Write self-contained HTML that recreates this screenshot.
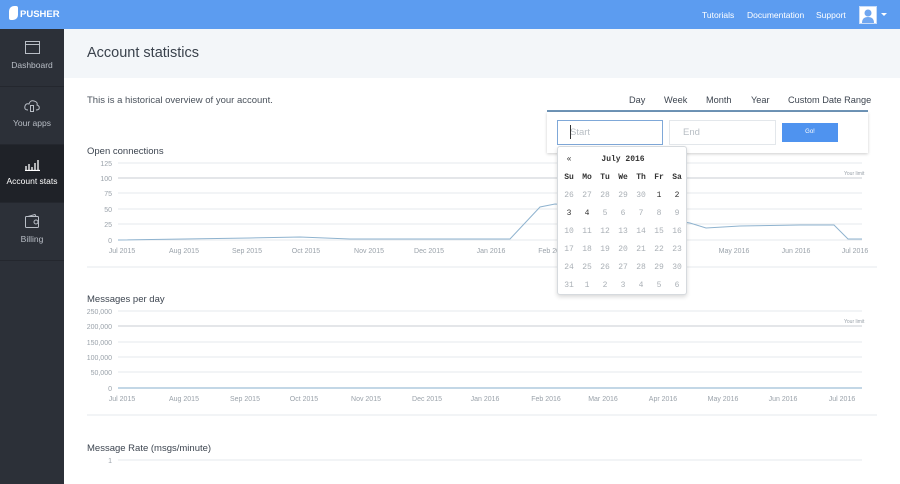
<!DOCTYPE html><html><head><style>
*{margin:0;padding:0;box-sizing:border-box}
body{width:900px;height:484px;overflow:hidden;background:#fff;font-family:"Liberation Sans",sans-serif;position:relative;color:#3d4550}
.a{position:absolute;white-space:nowrap}
.top{left:0;top:0;width:900px;height:29px;background:#5c9cf0}
.side{left:0;top:29px;width:64px;height:455px;background:#2c3038}
.it{position:absolute;left:0;width:64px;height:58px;border-bottom:1px solid #24272e;color:#b9bec6;font-size:8.5px;text-align:center}
.it span{position:absolute;left:0;right:0;bottom:16px}
.tab{font-size:9.2px;color:#3d4550;top:95px}
.cal{font-family:"Liberation Mono",monospace;font-size:8px;text-align:center}
.cal td{width:18px;height:18px;color:#aab0b6}
</style></head><body>
<div class="a top"></div>
<div class="a" style="left:9px;top:6px;width:9px;height:14px;background:#fff;border-radius:5px 2px 5px 2px"></div>
<div class="a" style="left:20px;top:9px;color:#fff;font-size:9.5px;font-weight:bold">PUSHER</div>
<div class="a" style="left:702px;top:10px;color:#fff;font-size:8.5px">Tutorials</div>
<div class="a" style="left:747px;top:10px;color:#fff;font-size:8.5px">Documentation</div>
<div class="a" style="left:816px;top:10px;color:#fff;font-size:8.5px">Support</div>
<div class="a" style="left:859px;top:6px;width:18px;height:18px;background:#fff;border:1px solid #c8dcf8"><svg width="16" height="16"><circle cx="8" cy="6" r="3.5" fill="#6fa6f0"/><path d="M2 16 Q2 10 8 10 Q14 10 14 16Z" fill="#6fa6f0"/></svg></div>
<div class="a" style="left:881px;top:13px;border:3px solid transparent;border-top-color:#fff"></div>
<div class="a side">
<div class="it" style="top:0"><svg style="position:absolute;left:25px;top:12px" width="15" height="13"><rect x=".5" y=".5" width="14" height="12" fill="none" stroke="#b9bec6"/><line x1="0" y1="3.5" x2="15" y2="3.5" stroke="#b9bec6"/></svg><span>Dashboard</span></div>
<div class="it" style="top:58px"><svg style="position:absolute;left:24px;top:12px" width="16" height="14"><path d="M4 11 Q0 11 1 7 Q2 4 5 5 Q6 1 10 2 Q14 3 13 6 Q16 7 15 10 Q14 11 12 11" fill="none" stroke="#b9bec6"/><rect x="6.5" y="6.5" width="3" height="6" fill="none" stroke="#b9bec6"/></svg><span>Your apps</span></div>
<div class="it" style="top:116px;background:#1f2228;color:#fff"><svg style="position:absolute;left:25px;top:14px" width="15" height="12"><path d="M1 11V7M4 11V5M7 11V8M10 11V4M13 11V1M0 11.5H15" stroke="#fff" stroke-width="1.3"/></svg><span>Account stats</span></div>
<div class="it" style="top:174px"><svg style="position:absolute;left:25px;top:11px" width="15" height="14"><rect x=".5" y="2.5" width="13" height="11" rx="1" fill="none" stroke="#b9bec6"/><circle cx="11" cy="8" r="2" fill="none" stroke="#b9bec6"/><path d="M3 2.5 L10 .5 L11 2.5" fill="none" stroke="#b9bec6"/></svg><span>Billing</span></div>
</div>
<div class="a" style="left:64px;top:29px;width:836px;height:49px;background:#f3f6f9"></div>
<div class="a" style="left:87px;top:45px;font-size:14.5px;color:#3a424c">Account statistics</div>
<div class="a" style="left:87px;top:95px;font-size:9.5px;color:#4a525c">This is a historical overview of your account.</div>
<div class="a tab" style="left:629px">Day</div>
<div class="a tab" style="left:664px">Week</div>
<div class="a tab" style="left:706px">Month</div>
<div class="a tab" style="left:751px">Year</div>
<div class="a tab" style="left:788px">Custom Date Range</div>
<div class="a" style="left:87px;top:146px;font-size:9.5px;color:#3d4550">Open connections</div>
<div class="a" style="left:87px;top:294px;font-size:9.5px;color:#3d4550">Messages per day</div>
<div class="a" style="left:87px;top:443px;font-size:9.5px;color:#3d4550">Message Rate (msgs/minute)</div>
<svg class="a" style="left:0;top:0" width="900" height="484" font-family="Liberation Sans" font-size="7" fill="#9aa2aa">
<g stroke="#e6e9ec"><line x1="118" y1="163" x2="862" y2="163"/><line x1="118" y1="193" x2="862" y2="193"/><line x1="118" y1="209" x2="862" y2="209"/><line x1="118" y1="224" x2="862" y2="224"/><line x1="118" y1="240" x2="862" y2="240"/>
<line x1="118" y1="311" x2="862" y2="311"/><line x1="118" y1="342" x2="862" y2="342"/><line x1="118" y1="357" x2="862" y2="357"/><line x1="118" y1="372" x2="862" y2="372"/><line x1="118" y1="460" x2="862" y2="460"/>
<line x1="87" y1="267" x2="877" y2="267"/><line x1="87" y1="415" x2="877" y2="415"/></g>
<g stroke="#c9ced3"><line x1="118" y1="178" x2="862" y2="178"/><line x1="118" y1="326" x2="862" y2="326"/></g>
<line x1="118" y1="388" x2="862" y2="388" stroke="#9fbfd6" stroke-width="1.2"/>
<polyline fill="none" stroke="#8fb3cf" points="118,240 250,238 300,237 350,239 510,239 540,207 555,204 570,205 690,223 706,228 740,226 800,225 834,225 848,239 862,239"/>
<text x="844" y="175" font-size="5">Your limit</text><text x="844" y="323" font-size="5">Your limit</text>
<g text-anchor="end"><text x="112" y="166">125</text><text x="112" y="181">100</text><text x="112" y="196">75</text><text x="112" y="212">50</text><text x="112" y="227">25</text><text x="112" y="243">0</text>
<text x="112" y="314">250,000</text><text x="112" y="329">200,000</text><text x="112" y="345">150,000</text><text x="112" y="360">100,000</text><text x="112" y="375">50,000</text><text x="112" y="391">0</text><text x="112" y="463">1</text></g>
<g text-anchor="middle"><text x="122" y="253">Jul 2015</text><text x="184" y="253">Aug 2015</text><text x="247" y="253">Sep 2015</text><text x="306" y="253">Oct 2015</text><text x="369" y="253">Nov 2015</text><text x="429" y="253">Dec 2015</text><text x="491" y="253">Jan 2016</text><text x="553" y="253">Feb 2016</text><text x="734" y="253">May 2016</text><text x="796" y="253">Jun 2016</text><text x="855" y="253">Jul 2016</text>
<text x="122" y="401">Jul 2015</text><text x="184" y="401">Aug 2015</text><text x="245" y="401">Sep 2015</text><text x="304" y="401">Oct 2015</text><text x="366" y="401">Nov 2015</text><text x="427" y="401">Dec 2015</text><text x="485" y="401">Jan 2016</text><text x="546" y="401">Feb 2016</text><text x="603" y="401">Mar 2016</text><text x="663" y="401">Apr 2016</text><text x="723" y="401">May 2016</text><text x="783" y="401">Jun 2016</text><text x="842" y="401">Jul 2016</text></g>
</svg>
<div class="a" style="left:547px;top:110px;width:321px;height:2px;background:#6f95b8"></div>
<div class="a" style="left:547px;top:112px;width:321px;height:41px;background:#fff;box-shadow:0 1px 3px rgba(0,0,0,.2)"></div>
<div class="a" style="left:557px;top:120px;width:106px;height:25px;border:1px solid #7fa8d8;font-size:9.5px;color:#b8bec4;padding:6px 0 0 12px">Start</div>
<div class="a" style="left:570px;top:125px;width:1px;height:14px;background:#333"></div>
<div class="a" style="left:669px;top:120px;width:107px;height:25px;border:1px solid #e3e7eb;font-size:9.5px;color:#b8bec4;padding:6px 0 0 13px">End</div>
<div class="a" style="left:782px;top:123px;width:56px;height:19px;background:#4f93ef;color:#fff;font-size:6px;text-align:center;line-height:19px">Go!</div>
<div class="a" style="left:557px;top:146px;width:130px;height:149px;background:#fff;border:1px solid #d6dade;border-radius:3px;box-shadow:0 2px 4px rgba(0,0,0,.15)">
<table class="cal" style="position:absolute;left:2px;top:3px;border-collapse:collapse">
<tr><td style="color:#333">«</td><td colspan="5" style="color:#333;font-weight:bold">July 2016</td><td></td></tr>
<tr style="font-weight:bold"><td style="color:#333">Su</td><td style="color:#333">Mo</td><td style="color:#333">Tu</td><td style="color:#333">We</td><td style="color:#333">Th</td><td style="color:#333">Fr</td><td style="color:#333">Sa</td></tr>
<tr><td>26</td><td>27</td><td>28</td><td>29</td><td>30</td><td style="color:#333">1</td><td style="color:#333">2</td></tr>
<tr><td style="color:#333">3</td><td style="color:#333">4</td><td>5</td><td>6</td><td>7</td><td>8</td><td>9</td></tr>
<tr><td>10</td><td>11</td><td>12</td><td>13</td><td>14</td><td>15</td><td>16</td></tr>
<tr><td>17</td><td>18</td><td>19</td><td>20</td><td>21</td><td>22</td><td>23</td></tr>
<tr><td>24</td><td>25</td><td>26</td><td>27</td><td>28</td><td>29</td><td>30</td></tr>
<tr><td>31</td><td>1</td><td>2</td><td>3</td><td>4</td><td>5</td><td>6</td></tr>
</table></div>
</body></html>
